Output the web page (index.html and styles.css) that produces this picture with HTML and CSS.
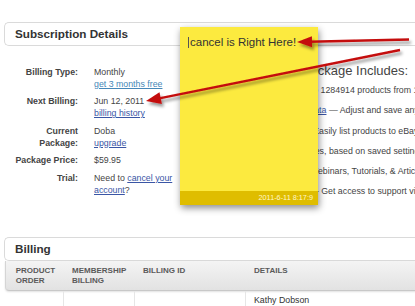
FILE: index.html
```html
<!DOCTYPE html>
<html lang="en">
<head>
  <meta charset="UTF-8">
  <meta name="viewport" content="width=device-width, initial-scale=1.0">
  <title>My Account</title>
  <link rel="stylesheet" href="styles.css">
</head>
<body>
  <div class="page">
    <section class="panel sub">
      <h2 class="panel-head">Subscription Details</h2>
      <div class="panel-body">
        <dl class="details">
          <dt>Billing Type:</dt>
          <dd>Monthly<br><a class="promo" href="#">get 3 months free</a></dd>
          <dt>Next Billing:</dt>
          <dd>Jun 12, 2011<br><a href="#">billing history</a></dd>
          <dt>Current Package:</dt>
          <dd>Doba<br><a href="#">upgrade</a></dd>
          <dt>Package Price:</dt>
          <dd>$59.95</dd>
          <dt>Trial:</dt>
          <dd>Need to <a href="#">cancel your account</a>?</dd>
        </dl>
        <div class="includes">
          <h3>Your Package Includes:</h3>
          <ul>
            <li>Access to 1284914 products from 165 suppliers</li>
            <li><a href="#">Export Data</a> — Adjust and save any product data</li>
            <li>Sync — Easily list products to eBay and other stores</li>
            <li>Auto prices, based on saved settings</li>
            <li>Helpful Webinars, Tutorials, &amp; Articles</li>
            <li>Tickets — Get access to support via email and phone</li>
          </ul>
        </div>
      </div>
    </section>

    <section class="panel billing">
      <h2 class="panel-head">Billing</h2>
      <div class="bill-row bill-head">
        <div class="cell">Product<br>Order</div>
        <div class="cell">Membership<br>Billing</div>
        <div class="cell">Billing ID</div>
        <div class="cell">Details</div>
      </div>
      <div class="bill-row bill-body">
        <div class="cell"></div>
        <div class="cell"></div>
        <div class="cell"></div>
        <div class="cell">Kathy Dobson</div>
      </div>
    </section>

    <div class="note">
      <div class="note-text"><span class="caret"></span>cancel is Right Here!</div>
      <div class="note-foot">2011-6-11 8:17:9</div>
    </div>

    <svg class="arrows" viewBox="0 0 415 306">
      <defs>
        <filter id="shadow" x="-10%" y="-50%" width="120%" height="200%">
          <feDropShadow dx="2" dy="3" stdDeviation="1.8" flood-color="#000" flood-opacity="0.4"/>
        </filter>
      </defs>
      <g filter="url(#shadow)" fill="#c40d0d" stroke="#c40d0d">
        <line x1="409" y1="39.5" x2="309" y2="41.7" stroke-width="2.6"/>
        <polygon points="297,42 312.1,47.2 311.9,36.2" stroke="none"/>
        <line x1="400" y1="50" x2="158" y2="98.6" stroke-width="2.4"/>
        <polygon points="146,101 161.9,103.9 159.5,92.2" stroke="none"/>
      </g>
    </svg>
  </div>
</body>
</html>
```

FILE: styles.css
```css
body {
  margin: 0;
  font-family: "Liberation Sans", Arial, sans-serif;
  color: #444;
  background: #fff;
}

.page {
  position: relative;
  width: 415px;
  height: 306px;
  overflow: hidden;
  padding-top: 22px;
  box-sizing: border-box;
}

.panel {
  margin-left: 4px;
  width: 440px;
}

.panel-head {
  margin: 0;
  height: 24px;
  box-sizing: border-box;
  border: 1px solid #dadada;
  border-right: 0;
  border-radius: 5px 0 0 5px;
  padding-left: 10px;
  font-size: 11.7px;
  line-height: 22px;
  font-weight: bold;
  color: #333;
}

a {
  color: #3a56a5;
  text-decoration: underline;
}

/* subscription details */

.sub .panel-body {
  display: flex;
  height: 191px;
  padding-left: 6px;
}

.details {
  margin: 0;
  padding-top: 19.5px;
  display: grid;
  grid-template-columns: 68px 90px;
  column-gap: 16px;
  row-gap: 5.5px;
  align-content: start;
  font-size: 8.8px;
  line-height: 12px;
}

.details dt {
  text-align: right;
  font-weight: bold;
  color: #444;
}

.details dd {
  margin: 0;
  color: #444;
}

.promo {
  color: #4688b8;
}

.includes {
  margin-left: 88px;
  padding-top: 17.2px;
  white-space: nowrap;
}

.includes h3 {
  margin: 0;
  font-size: 13px;
  line-height: 16px;
  font-weight: normal;
  color: #444;
}

.includes ul {
  list-style: none;
  margin: 1px 0 0;
  padding-left: 8px;
  font-size: 8.8px;
  line-height: 20.2px;
}

/* billing table */

.bill-row {
  display: grid;
  grid-template-columns: 57px 71px 111px 1fr;
  margin-left: 1px;
  border-left: 1px solid transparent;
}

.cell {
  padding-left: 8px;
  border-left: 1px solid transparent;
}

.cell:first-child {
  border-left: 0;
  padding-left: 9.7px;
}

.bill-head {
  background: linear-gradient(#f4f4f4, #e2e2e2);
  border-left-color: #d5d5d5;
  border-bottom: 1px solid #c8c8c8;
  border-bottom-left-radius: 4px;
  box-shadow: 0 1px 2px rgba(0, 0, 0, 0.12);
  font-size: 8px;
  line-height: 10px;
  font-weight: bold;
  color: #5a5a5a;
  text-transform: uppercase;
}

.bill-head .cell {
  padding-top: 5px;
  padding-bottom: 4px;
}

.bill-body {
  height: 30px;
  font-size: 8.8px;
  line-height: 12px;
  color: #333;
}

.bill-body .cell {
  padding-top: 2.6px;
}

.bill-body .cell + .cell {
  border-left-color: #e6e6e6;
}

/* sticky note */

.note {
  position: absolute;
  left: 180px;
  top: 27px;
  width: 138px;
  height: 178px;
  background: #fcea3f;
  box-shadow: 1px 3px 7px rgba(0, 0, 0, 0.45);
  display: flex;
  flex-direction: column;
}

.note-text {
  flex: 1;
  padding: 7.5px 0 0 8px;
  font-size: 11.5px;
  line-height: 14px;
  color: #333;
}

.caret {
  display: inline-block;
  width: 1px;
  height: 11px;
  background: #555;
  vertical-align: -2px;
  margin-right: 1px;
}

.note-foot {
  height: 14px;
  background: #dfbd00;
  text-align: right;
  padding-right: 5px;
  font-size: 7.3px;
  line-height: 14px;
  color: #fff7c8;
}

.arrows {
  position: absolute;
  left: 0;
  top: 0;
  width: 415px;
  height: 306px;
  pointer-events: none;
}
```
